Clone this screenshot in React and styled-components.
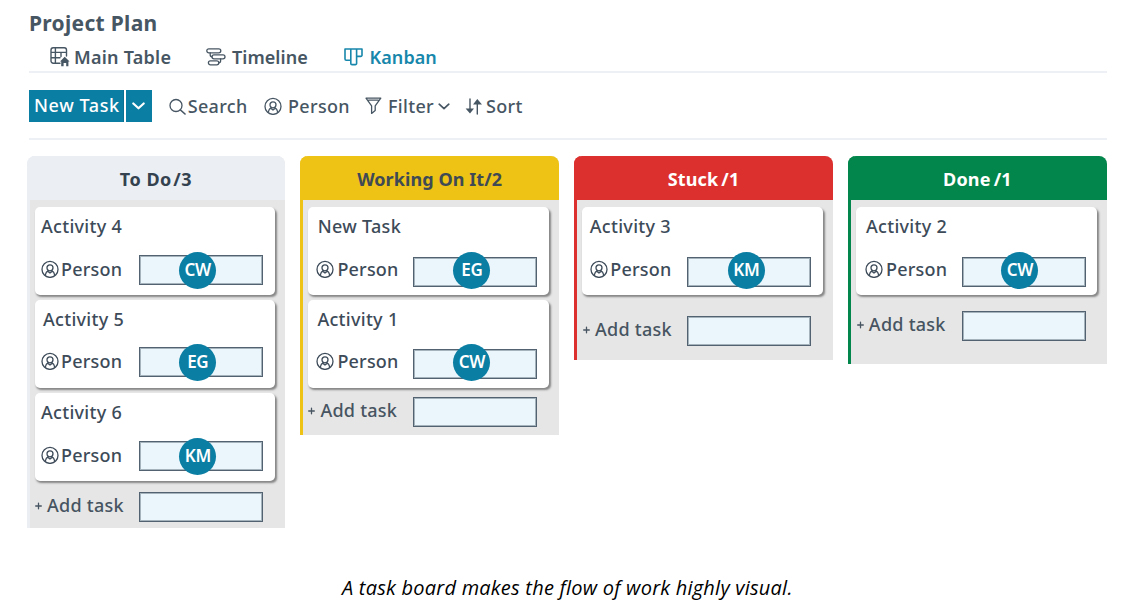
import React from "react";
import styled, { createGlobalStyle } from "styled-components";

const ink = "#475663";
const teal = "#0b7ea3";

const Global = createGlobalStyle`
  * { box-sizing: border-box; }
  body { margin: 0; background: #fff; font-family: "Noto Sans", "Open Sans", sans-serif; }
  svg { display: block; flex: none; }
`;

const Page = styled.main`
  width: 1138px;
  height: 611px;
  padding: 8px 31px 0 27px;
  overflow: hidden;
  display: flex;
  flex-direction: column;
  color: ${ink};
`;

const Title = styled.h1`
  margin: 0 0 0 2px;
  height: 32px;
  font-size: 21px;
  font-weight: 700;
  line-height: 30px;
  letter-spacing: 0.3px;
`;

const Tabs = styled.nav`
  display: flex;
  align-items: center;
  height: 31px;
  margin-left: 2px;
  padding: 3px 0 0 21px;
  flex: none;
`;

const Rule = styled.div`
  height: 2px;
  margin-left: 2px;
  background: #edf1f6;
  flex: none;
`;

const Item = styled.div`
  display: flex;
  align-items: center;
  gap: ${(p) => p.$gap}px;
  width: ${(p) => p.$width}px;
  flex: none;
  white-space: nowrap;
  font-size: 18px;
  font-weight: 500;
  line-height: 24px;
  letter-spacing: 0.32px;
  color: ${ink};
`;

const Tab = styled(Item)`
  font-weight: 600;
  letter-spacing: ${(p) => p.$track || 0}px;
  color: ${(p) => (p.$active ? "#1787ab" : ink)};
`;

const Toolbar = styled.div`
  display: flex;
  align-items: center;
  height: 32px;
  margin: 17px 0 16px 2px;
  flex: none;
`;

const NewTask = styled.button`
  width: 95px;
  height: 32px;
  padding: 0 0 2px 5px;
  border: 0;
  border-right: 1px solid #0a6f90;
  background: ${teal};
  color: #fff;
  font: 500 18px/28px "Noto Sans", sans-serif;
  letter-spacing: 0.6px;
  text-align: left;
  white-space: nowrap;
`;

const Caret = styled.button`
  display: flex;
  align-items: center;
  justify-content: center;
  width: 26px;
  height: 32px;
  margin: 0 17px 0 2px;
  padding: 0 1px 0 0;
  border: 0;
  background: ${teal};
  color: #fff;
`;

const Board = styled.section`
  display: grid;
  grid-template-columns: 258px repeat(3, 258.5px);
  column-gap: 15.4px;
  align-items: start;
  height: 414px;
  padding-top: 16px;
  flex: none;
`;

const Column = styled.article`
  height: ${(p) => p.$height}px;
  border-left: 3px solid ${(p) => p.$color};
  border-radius: 8px 8px 0 0;
  background: #e6e6e6;
`;

const Head = styled.header`
  height: 44px;
  margin-left: -3px;
  padding-top: 1px;
  display: flex;
  align-items: center;
  justify-content: center;
  border-radius: 8px 8px 0 0;
  background: ${(p) => p.$color};
  color: ${(p) => p.$ink};
  font-size: 18px;
  font-weight: 700;
  letter-spacing: ${(p) => p.$track || 0}px;
  white-space: pre;
`;

const Count = styled.span`
  margin-left: ${(p) => p.$space || 0}px;
`;

const Stack = styled.div`
  display: flex;
  flex-direction: column;
  gap: 5px;
  padding: 7px 9.8px 0 5px;
`;

const Card = styled.div`
  height: 88px;
  padding: 7px ${(p) => p.$end}px 0 ${(p) => p.$inset}px;
  border-radius: 5px;
  background: #fff;
  box-shadow: 1.5px 2px 2px rgba(40, 40, 40, 0.5);
  color: #3d4b59;
`;

const CardTitle = styled.div`
  height: 24px;
  margin-left: ${(p) => p.$indent || 0}px;
  font-size: 18px;
  font-weight: 500;
  line-height: 24px;
  letter-spacing: 0.3px;
`;

const CardRow = styled.div`
  display: flex;
  justify-content: space-between;
  margin-top: ${(p) => p.$top || 17}px;
`;

const Assignee = styled.div`
  display: flex;
  align-items: center;
  gap: ${(p) => p.$gap || 2}px;
  height: 28px;
  font-size: 18px;
  font-weight: 500;
  line-height: 24px;
  letter-spacing: 0.2px;
`;

const Field = styled.div`
  position: relative;
  width: 124px;
  height: 30px;
  margin-top: ${(p) => p.$drop || 0}px;
  border: 1px solid #526270;
  background: #eaf6fb;
  box-shadow: inset 0 0 0 1px rgba(82, 98, 112, 0.45);
  flex: none;
`;

const Avatar = styled.span`
  position: absolute;
  left: ${(p) => (p.$left || 39.5)}px;
  top: ${(p) => -4 - (p.$drop || 0)}px;
  width: 37px;
  height: 37px;
  border-radius: 50%;
  background: ${teal};
  color: #fff;
  font-size: 17px;
  font-weight: 600;
  line-height: 36px;
  text-align: center;
  letter-spacing: -0.3px;
`;

const AddRow = styled.div`
  display: flex;
  justify-content: space-between;
  margin-top: ${(p) => p.$top}px;
  padding-right: ${(p) => p.$end}px;
`;

const AddLabel = styled.div`
  display: flex;
  align-items: center;
  gap: 5px;
  height: 26px;
  margin-left: ${(p) => p.$indent || 0}px;
  color: #475461;
  font-size: 18px;
  font-weight: 500;
  letter-spacing: 0.25px;
`;

const Caption = styled.p`
  margin: 19px 0 0 315px;
  color: #000;
  font: italic 400 20px/30px "Open Sans", sans-serif;
  letter-spacing: 0.23px;
  white-space: nowrap;
`;

const Svg = ({ w, h, sw = 1.3, children }) => (
  <svg width={w} height={h} viewBox={`0 0 ${w} ${h}`} fill="none" stroke="currentColor" strokeWidth={sw} strokeLinecap="round" strokeLinejoin="round">
    {children}
  </svg>
);

const TableIcon = () => (
  <Svg w={20} h={20} sw={1.4}>
    <path d="M10 16.2H3.2A2.2 2.2 0 0 1 1 14V3A2.2 2.2 0 0 1 3.2 0.8H14.3A2.2 2.2 0 0 1 16.5 3V9M1 5.4H16.5M1 10.8H10M5.4 0.8V16.2M11 5.4V9.5" />
    <path d="M14.7 9.8L19.6 14.6H18.4V19.2H16.2V16H13.6V19.2H11.2V14.6H10Z" fill="currentColor" stroke="none" />
  </Svg>
);

const TimelineIcon = () => (
  <Svg w={20} h={18}>
    <rect x="0.8" y="0.8" width="14" height="4" rx="2" />
    <rect x="6" y="6.8" width="13" height="4" rx="2" />
    <rect x="2.4" y="12.8" width="10.4" height="4" rx="2" />
    <path d="M4.2 4.8V6.8Q4.2 8.8 6 8.8M14.6 10.8V12.8Q14.6 14.8 12.8 14.8" />
  </Svg>
);

const KanbanIcon = () => (
  <Svg w={19} h={18} sw={1.6}>
    <path d="M1 1H18V7.2A1.2 1.2 0 0 1 16.8 8.4H12.6V15.4A1.2 1.2 0 0 1 11.4 16.6H8A1.2 1.2 0 0 1 6.8 15.4V12.2H2.2A1.2 1.2 0 0 1 1 11ZM6.8 1V12.2M12.6 1V8.4" />
  </Svg>
);

const SearchIcon = () => (
  <Svg w={17} h={17}>
    <circle cx="7" cy="7.5" r="6" />
    <path d="M11.5 12L16 16" strokeWidth="1.6" />
  </Svg>
);

const PersonIcon = () => (
  <Svg w={18} h={18} sw={1.3}>
    <circle cx="9" cy="9.4" r="8" />
    <circle cx="9" cy="7.8" r="3" />
    <path d="M4.4 14.8L5.2 12.6Q5.6 11.6 7 11.2V10.6M11 10.6V11.2Q12.4 11.6 12.8 12.6L13.6 14.8M7 11.4L9 13L11 11.4" />
  </Svg>
);

const FilterIcon = () => (
  <Svg w={17} h={18}>
    <path d="M1 1.2H15.8L10.2 8.8V13.6L6.6 16.4V8.8ZM3.6 3.2H13.2" />
  </Svg>
);

const Chevron = ({ w = 12, h = 7, sw = 1.7 }) => (
  <svg width={w} height={h} viewBox="0 0 12 7" fill="none" stroke="currentColor" strokeWidth={sw} strokeLinecap="round" strokeLinejoin="round">
    <path d="M1.2 1.2L6 5.6L10.8 1.2" />
  </svg>
);

const SortIcon = () => (
  <Svg w={18} h={17} sw={1.4}>
    <path d="M5 1V12M12.3 16V5" />
    <path d="M0.6 10.5H9L5 15.4ZM8 6.4H17L12.3 1Z" fill="currentColor" stroke="none" />
  </Svg>
);

const PlusIcon = () => (
  <Svg w={7} h={20} sw={1.3}>
    <path d="M0.7 11H6.3M3.5 8.2V13.8" />
  </Svg>
);

const columns = [
  {
    name: "To Do", count: "/3", space: 1.5, track: 0.5, color: "#ebeff4", ink: "#34424f", height: 372, addTop: 6, end: 12.4,
    cards: [
      { title: "Activity 4", who: "CW", inset: 6 },
      { title: "Activity 5", who: "EG", inset: 6, indent: 2, top: 16 },
      { title: "Activity 6", who: "KM", inset: 6 },
    ],
  },
  {
    name: "Working On It", count: "/2", track: 0.07, color: "#eec315", ink: "#3f4a55", height: 279, addTop: 4, end: 12.2, gap: 3,
    cards: [
      { title: "New Task", who: "EG", inset: 8, indent: 1.3, drop: 2 },
      { title: "Activity 1", who: "CW", inset: 8, indent: 1, drop: 2, top: 16 },
    ],
  },
  {
    name: "Stuck", count: "/1", space: 3, track: 0.15, color: "#dc302f", ink: "#fff", height: 204, addTop: 16, end: 11.7, gap: 2.5, addIndent: 0.7,
    cards: [{ title: "Activity 3", who: "KM", inset: 7.5, drop: 2 }],
  },
  {
    name: "Done", count: "/1", space: 3, track: 0.2, color: "#02864b", ink: "#fff", height: 208, addTop: 11, end: 10.9, gap: 2.8, avatarLeft: 38.5, addIndent: 0.7,
    cards: [{ title: "Activity 2", who: "CW", inset: 9, indent: 0.8, drop: 2 }],
  },
];

export default function App() {
  return (
    <Page>
      <Global />
      <Title>Project Plan</Title>
      <Tabs>
        <Tab $gap={4} $width={156} $track={0.25}><TableIcon />Main Table</Tab>
        <Tab $gap={6} $width={138} $track={0.05}><TimelineIcon />Timeline</Tab>
        <Tab $gap={6.5} $width={100} $track={0.08} $active><KanbanIcon />Kanban</Tab>
      </Tabs>
      <Rule />
      <Toolbar>
        <NewTask>New Task</NewTask>
        <Caret><Chevron w={13} h={8} sw={2} /></Caret>
        <Item $gap={1.7} $width={95}><SearchIcon />Search</Item>
        <Item $gap={6} $width={100.5}><PersonIcon />Person</Item>
        <Item $gap={6.5} $width={73}><FilterIcon />Filter</Item>
        <Item $gap={0} $width={27}><Chevron /></Item>
        <Item $gap={3.5} $width={70}><SortIcon />Sort</Item>
      </Toolbar>
      <Rule />
      <Board>
        {columns.map((c) => (
          <Column key={c.name} $color={c.color} $height={c.height}>
            <Head $color={c.color} $ink={c.ink} $track={c.track}>
              {c.name}<Count $space={c.space}>{c.count}</Count>
            </Head>
            <Stack>
              {c.cards.map((k) => (
                <Card key={k.title} $inset={k.inset} $end={c.end}>
                  <CardTitle $indent={k.indent}>{k.title}</CardTitle>
                  <CardRow $top={k.top}>
                    <Assignee $gap={c.gap}><PersonIcon />Person</Assignee>
                    <Field $drop={k.drop}>
                      <Avatar $drop={k.drop} $left={c.avatarLeft}>{k.who}</Avatar>
                    </Field>
                  </CardRow>
                </Card>
              ))}
              <AddRow $top={c.addTop} $end={c.end}>
                <AddLabel $indent={c.addIndent}><PlusIcon />Add task</AddLabel>
                <Field />
              </AddRow>
            </Stack>
          </Column>
        ))}
      </Board>
      <Caption>A task board makes the flow of work highly visual.</Caption>
    </Page>
  );
}
